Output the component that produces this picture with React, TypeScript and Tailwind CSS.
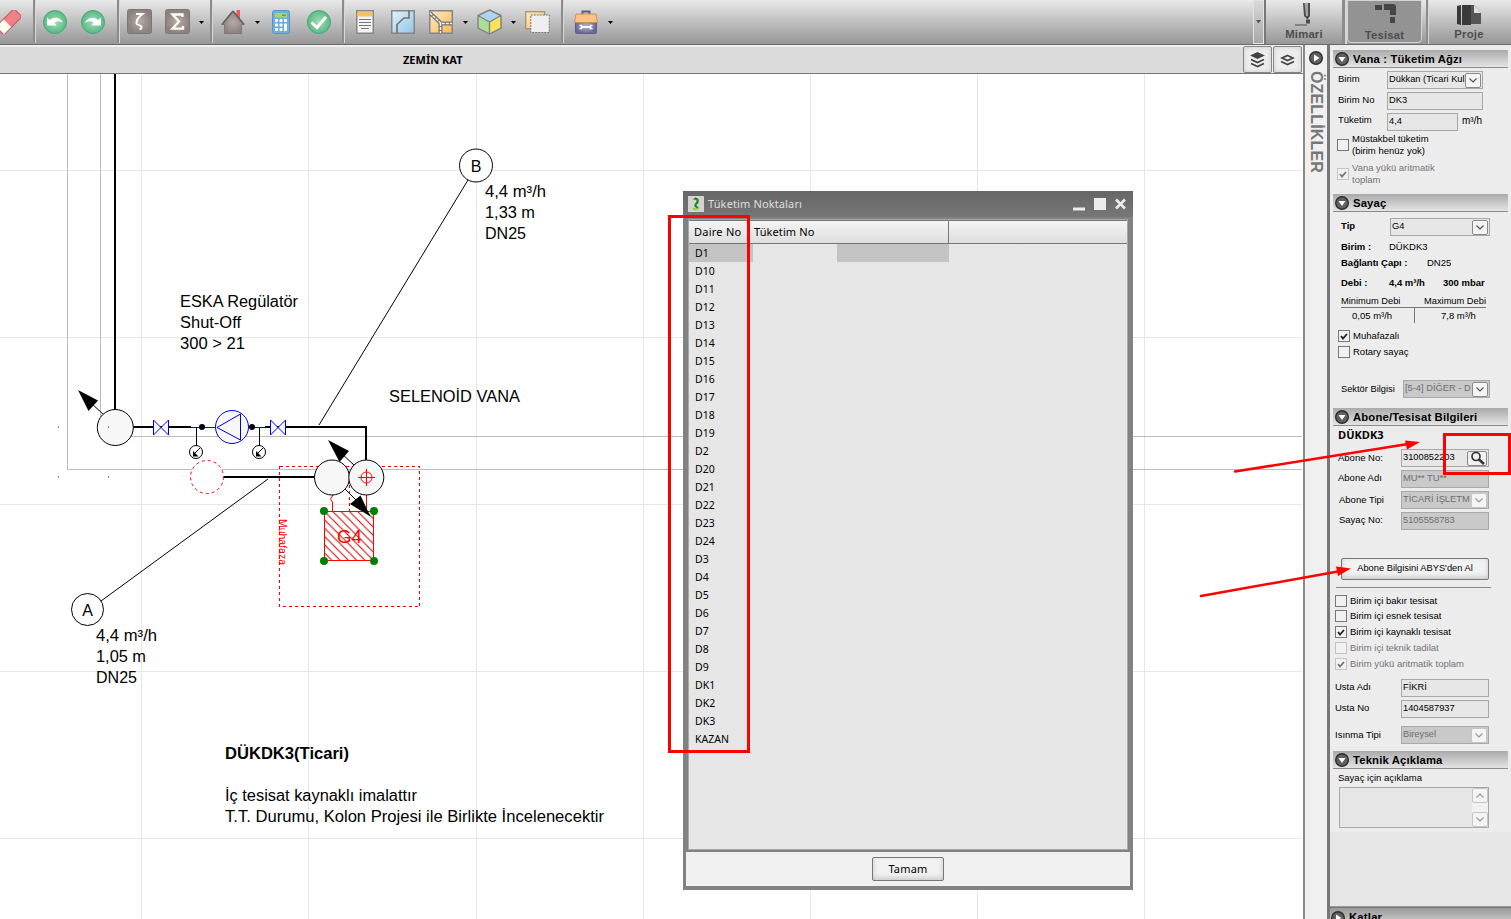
import type { ReactNode } from 'react';

const UNITS = [
  'D1', 'D10', 'D11', 'D12', 'D13', 'D14', 'D15', 'D16', 'D17', 'D18', 'D19', 'D2', 'D20', 'D21',
  'D22', 'D23', 'D24', 'D3', 'D4', 'D5', 'D6', 'D7', 'D8', 'D9', 'DK1', 'DK2', 'DK3', 'KAZAN',
];

/* ---------- toolbar ---------- */

const Sep = ({ className }: { className: string }) => (
  <div className={`h-[43px] w-[3px] shrink-0 self-start border-r border-[#d8d8d8] bg-[#8b8b8b] ${className}`} />
);

const Caret = ({ className }: { className: string }) => (
  <svg className={`h-[3px] w-[5px] shrink-0 ${className}`} viewBox="0 0 5 3"><path d="M0 0h5L2.5 3z" fill="#000" /></svg>
);

const Ico = ({ className, w = 24, h = 24, children }: { className: string; w?: number; h?: number; children: ReactNode }) => (
  <svg className={`-mt-px shrink-0 ${className}`} width={w} height={h} viewBox={`0 0 ${w} ${h}`}>{children}</svg>
);

function Toolbar() {
  return (
    <div className="flex h-[45px] shrink-0 items-center border-b border-[#6a6a6a] bg-linear-to-b from-[#e9e9e9] to-[#979797]">
      <svg width="0" height="0" className="absolute">
        <defs>
          <radialGradient id="green"><stop offset="0" stopColor="#a5dcb9" /><stop offset="1" stopColor="#58b985" /></radialGradient>
          <radialGradient id="taupe"><stop offset="0" stopColor="#b5aca9" /><stop offset="1" stopColor="#8b8280" /></radialGradient>
          <linearGradient id="blue" x1="0" y1="0" x2="1" y2="1"><stop offset="0" stopColor="#e4f2fb" /><stop offset="1" stopColor="#8fc4e6" /></linearGradient>
          <linearGradient id="amber" x1="0" y1="0" x2="1" y2="1"><stop offset="0" stopColor="#fdeccb" /><stop offset="1" stopColor="#fbb84e" /></linearGradient>
          <radialGradient id="violet"><stop offset="0" stopColor="#b5b2d6" /><stop offset="1" stopColor="#6b6896" /></radialGradient>
        </defs>
      </svg>
      <Ico className="-ml-[3px]">
        <g transform="rotate(-45 12 12)">
          <rect x="-1" y="6" width="26" height="11.500" rx="2.500" fill="#ee8185" stroke="#c95a62" />
          <rect x="0" y="6.500" width="10" height="10.500" fill="#fffdf0" />
        </g>
      </Ico>
      <Sep className="ml-3" />
      <Ico className="ml-[7px]">
        <circle cx="12" cy="12" r="11.500" fill="url(#green)" stroke="#45a873" />
        <path d="M4 15.500V7.500l3 2.500C11 6.500 17.500 7 20 13c-3-2-6-2.500-8.500-.5l2 3z" fill="#fff" />
      </Ico>
      <Ico className="ml-3.5">
        <circle cx="12" cy="12" r="11.500" fill="url(#green)" stroke="#45a873" />
        <path d="M20 15.500V7.500l-3 2.500C13 6.500 6.500 7 4 13c3-2 6-2.500 8.500-.5l-2 3z" fill="#fff" />
      </Ico>
      <Sep className="ml-3" />
      <Ico className="ml-[7px]" w={25} h={25}>
        <rect x=".5" y=".5" width="24" height="24" rx="2" fill="url(#taupe)" stroke="#7e7674" />
        <path d="M9 5h6.500c-5 4-6.500 7-6 9.500.8 2 5.500 1.500 5 4.200-.2 1-1 1.300-2 1.600" fill="none" stroke="#fffdf0" strokeWidth="2" />
      </Ico>
      <Ico className="ml-[13px]" w={25} h={25}>
        <rect x=".5" y=".5" width="24" height="24" rx="2" fill="url(#taupe)" stroke="#7e7674" />
        <path d="M17.500 8V5.500h-10l6.500 7-6.500 7.200h10.500V17" fill="none" stroke="#fffdf0" strokeWidth="2.300" />
      </Ico>
      <Caret className="ml-[9px]" />
      <Sep className="ml-1.5" />
      <Ico className="ml-2">
        <rect x="15.500" y="0" width="3.500" height="9" fill="#ee5a5a" />
        <path d="M12 1L.8 14.500H3.500V23.500h17v-9h2.700z" fill="url(#taupe)" stroke="#827876" />
        <path d="M12 1L1 14.500M12 1l11 13.500" stroke="#665e5c" strokeWidth="1.500" />
      </Ico>
      <Caret className="ml-2.5" />
      <Ico className="ml-3" w={18}>
        <rect x=".5" y=".5" width="17" height="23" rx="2" fill="#6fafdd" stroke="#5a94c4" />
        <rect x="3" y="3" width="12" height="4.500" rx="1" fill="#a8d468" />
        <rect x="10" y="4.500" width="4" height="1.500" fill="#58a552" />
        <g fill="#fff">
          <rect x="3" y="9" width="3" height="3" rx="1" /><rect x="7.500" y="9" width="3" height="3" rx="1" /><rect x="12" y="9" width="3" height="3" rx="1" />
          <rect x="3" y="13.500" width="3" height="3" rx="1" /><rect x="7.500" y="13.500" width="3" height="3" rx="1" /><rect x="12" y="13.500" width="3" height="7.500" rx="1" />
          <rect x="3" y="18" width="3" height="3" rx="1" /><rect x="7.500" y="18" width="3" height="3" rx="1" />
        </g>
      </Ico>
      <Ico className="ml-[17px]">
        <circle cx="12" cy="12" r="11.500" fill="url(#green)" stroke="#45a873" />
        <path d="M4.500 12.500l5.500 5L19 7" fill="none" stroke="#fff" strokeWidth="3" />
      </Ico>
      <Sep className="ml-[11px]" />
      <Ico className="ml-[11px]" w={18}>
        <rect x=".75" y=".75" width="16.500" height="22.500" fill="#f3f3f3" stroke="#858585" strokeWidth="1.500" />
        <rect x="1.500" y="2" width="15" height="4.500" fill="#fdbd62" />
        <path d="M3 9.500h12M3 12.500h12M3 15.500h12M5 18.500h8" stroke="#777" strokeWidth="1.200" />
      </Ico>
      <Ico className="ml-[17px]">
        <rect x=".75" y=".75" width="22.500" height="22.500" fill="url(#blue)" stroke="#858585" strokeWidth="1.500" />
        <path d="M6 23.500v-9l7-6.500h5V.5" fill="none" stroke="#747474" strokeWidth="1.700" />
      </Ico>
      <Ico className="ml-3.5">
        <rect x=".75" y=".75" width="22.500" height="22.500" fill="url(#amber)" stroke="#858585" strokeWidth="1.500" />
        <path d="M1 3l11 10.500h11M11.500 13v10" fill="none" stroke="#747474" strokeWidth="4" />
        <path d="M1 3l11 10.500h11M11.500 13v10" fill="none" stroke="#eee" strokeWidth="1.500" strokeDasharray="3 1" />
      </Ico>
      <Caret className="ml-2.5" />
      <Ico className="ml-[9px]" w={25} h={26}>
        <path d="M12.500 1L24 6.500 12.500 13 1 6.500z" fill="#acd5f2" />
        <path d="M1 6.500L12.500 13v12L1 19z" fill="#aadd96" />
        <path d="M24 6.500L12.500 13v12L24 19z" fill="#fbe25f" />
        <path d="M12.500 1L24 6.500V19l-11.500 6L1 19V6.500zM1 6.500L12.500 13 24 6.500M12.500 13v12" fill="none" stroke="#808080" strokeWidth="1.400" />
      </Ico>
      <Caret className="ml-[9px]" />
      <Ico className="ml-[9px]" w={25}>
        <rect x=".75" y="1.750" width="19" height="17" fill="url(#amber)" stroke="#9a8f70" strokeWidth="1.200" />
        <rect x="5.750" y="5" width="18.500" height="17.500" fill="#efefef" stroke="#777" strokeDasharray="2 1" />
      </Ico>
      <Sep className="ml-[11px]" />
      <Ico className="ml-2.5">
        <path d="M8.500 4V1.500h7V4" fill="none" stroke="#5e5b8c" strokeWidth="2" />
        <rect x="1.500" y="9" width="21" height="14.500" rx="1" fill="url(#violet)" stroke="#5e5b8c" />
        <path d="M2 4h20l1.500 8.500H.5z" fill="#fdc380" stroke="#c9904f" />
        <path d="M8 17h8" stroke="#fff" strokeWidth="2" />
        <path d="M5.500 15.500h2v3h-2M18.500 15.500h-2v3h2" fill="none" stroke="#fff" strokeWidth="1.500" />
      </Ico>
      <Caret className="ml-2.5" />

      <div className="ml-auto flex h-full w-[258px] shrink-0">
        <div className="flex h-[44px] w-[11px] items-center justify-center border border-[#e2e2e2] bg-linear-to-b from-[#d8d8d8] to-[#a8a8a8]">
          <svg width="5" height="4" viewBox="0 0 5 4"><path d="M0 0h5L2.500 3.500z" fill="#555" /></svg>
        </div>
        <div className="h-full w-0.5 bg-[#777]" />
        <ModeTab label="Mimari" className="w-[76px]">
          <path d="M11 1h7v13l-2.500 3.500L12 14z" fill="#4c4c4c" /><path d="M12.500 1h3.500v13h-2z" fill="#a5a5a5" />
          <path d="M14 17.500h4v4h-4z" fill="#4c4c4c" /><path d="M3 23h12" stroke="#4c4c4c" />
        </ModeTab>
        <div className="h-full w-[3px] bg-[#8c8c8c]" /><div className="h-full w-0.5 bg-[#d6d6d6]" />
        <div className="flex h-[43px] w-[75px] rounded-b-sm border border-[#d5d5d5] bg-[#939393]">
          <ModeTab label="Tesisat" className="w-full">
            <path d="M2 2h7v5H2zM11 1h9q3 0 3 3v8h-6V7h-6zM17 14h5v6h-5z" fill="#454545" />
          </ModeTab>
        </div>
        <div className="ml-1 h-full w-0.5 bg-[#8c8c8c]" /><div className="h-full w-px bg-[#d6d6d6]" />
        <ModeTab label="Proje" className="w-[80px]">
          <path d="M0 4l4-1v20l-4-1zM5 3h9v20H5z" fill="#3a3a3a" /><path d="M14 3h3l7 8v11H14z" fill="#565656" /><path d="M17 3l7 8h-7z" fill="#e0e0e0" />
        </ModeTab>
      </div>
    </div>
  );
}

const ModeTab = ({ label, className, children }: { label: string; className: string; children: ReactNode }) => (
  <div className={`flex flex-col items-center pt-[2px] ${className}`}>
    <svg width="24" height="24" viewBox="0 0 24 24" className="shrink-0">{children}</svg>
    <span className="mt-[2px] text-[11.3px] leading-[13px] font-bold tracking-[0.2px] text-[#4d4d4d]">{label}</span>
  </div>
);

/* ---------- drawing ---------- */

const Label = ({ x, y, len, children, bold }: { x: number; y: number; len: number; children: string; bold?: boolean }) => (
  <text x={x} y={y} textLength={len} lengthAdjust="spacingAndGlyphs" fontSize="16" fontWeight={bold ? 700 : 400} fill="#000">{children}</text>
);

const Valve = ({ x }: { x: number }) => (
  <path d={`M${x} 420v15l15-15v15z`} fill="#f7f7ff" stroke="#0000e6" />
);

const Gauge = ({ x }: { x: number }) => (
  <g>
    <path d={`M${x + 0.5} 428v18`} stroke="#000" />
    <circle cx={x} cy="452" r="6.500" fill="#fff" stroke="#000" />
    <path d={`M${x + 4} 448l-5 5`} stroke="#000" />
    <path d={`M${x - 3} 451v5.500h5.500z`} fill="#000" />
  </g>
);

function Drawing() {
  return (
    <svg className="block shrink-0 bg-white font-['Liberation_Sans',sans-serif]" width="1303" height="845" viewBox="0 74 1303 845">
      <g stroke="#e6e6e6" shapeRendering="crispEdges">
        {[141.5, 308.5, 476.5, 643.5, 810.5, 977.5, 1144.5].map((x) => <path key={x} d={`M${x} 74v845`} />)}
        {[170.5, 337.5, 504.5, 671.5, 838.5].map((y) => <path key={y} d={`M0 ${y}h1302`} />)}
      </g>
      <path d="M67.500 74v395.500H1302M100.500 74v362.500H1302" fill="none" stroke="#bdbdbd" shapeRendering="crispEdges" />
      <path d="M115 74v336M133 427h58M265 427h101v33M223 477h92" fill="none" stroke="#000" strokeWidth="2" shapeRendering="crispEdges" />
      <path d="M191 427.500h26M248 427.500h17" stroke="#0000e6" shapeRendering="crispEdges" />
      <path d="M58 426h1v2h-1zM58 476h1v2h-1zM108 476h1v2h-1z" fill="#8a8a8a" />

      <path d="M91 403l13 12" stroke="#000" />
      <path d="M78 390l20 10.500-9.500 10.500z" fill="#000" />
      <circle cx="115.300" cy="427.500" r="18" fill="#f7f7f7" stroke="#000" />
      <path d="M108 426h1v2h-1z" fill="#8a8a8a" />
      <Valve x={153.5} />
      <Valve x={270.5} />
      <Gauge x={196} />
      <Gauge x={259} />
      <circle cx="202" cy="427" r="3" /><circle cx="252" cy="427" r="3" />
      <circle cx="232" cy="427" r="16.500" fill="#f7f7f7" stroke="#0000e6" />
      <path d="M217 427.500l23.500-13.500v26z" fill="none" stroke="#0000e6" />

      <circle cx="207" cy="477" r="16.500" fill="#fff" stroke="#f00" strokeDasharray="3 3" />
      <rect x="279.500" y="466.500" width="140" height="140" fill="none" stroke="#f00" strokeDasharray="3 3" shapeRendering="crispEdges" />
      <path d="M268 479L101 601M468 180L319 425" stroke="#000" />
      <circle cx="87.500" cy="609.500" r="16" fill="#fff" stroke="#000" />
      <circle cx="476" cy="165.500" r="16.500" fill="#fff" stroke="#000" />

      <path d="M340 452l15 14" stroke="#000" />
      <path d="M328 440l21 11-9.500 11z" fill="#000" />
      <path d="M366.500 495v16M333 495l-2.500 4 2 3v9" fill="none" stroke="#f00" />
      <path d="M349.500 485v27" stroke="#f00" strokeDasharray="3 3" />
      <circle cx="332" cy="477.500" r="17.500" fill="#f7f7f7" stroke="#000" />
      <circle cx="366.300" cy="477.500" r="17.500" fill="#f7f7f7" stroke="#000" />
      <circle cx="366.500" cy="477.500" r="5.500" fill="none" stroke="#f00" />
      <path d="M358 477.500h17M366.500 469v17" stroke="#f00" />
      <defs>
        <pattern id="hatch" width="8.300" height="8.300" patternUnits="userSpaceOnUse" x="324" y="511">
          <path d="M-2-2L10.300 10.300M-2 6.300L2 10.300M6.300-2L10.300 2" stroke="#d00000" strokeWidth="1" />
        </pattern>
      </defs>
      <rect x="324.500" y="511.500" width="49" height="49" fill="#fff" />
      <rect x="324.500" y="511.500" width="49" height="49" fill="url(#hatch)" stroke="#f00" />
      <path d="M345 489l14 14" stroke="#000" />
      <path d="M370.500 516.500L350 504l10.500-8.500z" fill="#000" />
      <g fill="#008000"><circle cx="324" cy="511" r="4" /><circle cx="374" cy="511" r="4" /><circle cx="324" cy="561" r="4" /><circle cx="374" cy="561" r="4" /></g>
      <text x="337" y="543" textLength="25" lengthAdjust="spacingAndGlyphs" fontSize="18" fill="#f00">G4</text>
      <text transform="translate(279 519) rotate(90)" textLength="46" lengthAdjust="spacingAndGlyphs" fontSize="10" fill="#f00">Muhafaza</text>

      <text x="87.500" y="615.500" fontSize="16" textAnchor="middle">A</text>
      <text x="476" y="171.500" fontSize="16" textAnchor="middle">B</text>
      <Label x={485} y={197} len={61}>4,4 m³/h</Label>
      <Label x={485} y={218} len={50}>1,33 m</Label>
      <Label x={485} y={239} len={41}>DN25</Label>
      <Label x={180} y={307} len={118}>ESKA Regülatör</Label>
      <Label x={180} y={328} len={61}>Shut-Off</Label>
      <Label x={180} y={349} len={65}>{'300 > 21'}</Label>
      <Label x={389} y={402} len={131}>SELENOİD VANA</Label>
      <Label x={96} y={641} len={61}>4,4 m³/h</Label>
      <Label x={96} y={662} len={50}>1,05 m</Label>
      <Label x={96} y={683} len={41}>DN25</Label>
      <Label x={225} y={759} len={124} bold>DÜKDK3(Ticari)</Label>
      <Label x={225} y={801} len={192}>İç tesisat kaynaklı imalattır</Label>
      <Label x={225} y={822} len={379}>T.T. Durumu, Kolon Projesi ile Birlikte İncelenecektir</Label>
    </svg>
  );
}

function LayerButton({ single }: { single?: boolean }) {
  return (
    <div className="mt-px flex h-[27px] w-[29px] items-center justify-center rounded-xs border border-[#858585] bg-[#ededed] shadow-[inset_0_0_5px_#ccc]">
      {single ? (
        <svg width="15" height="12" viewBox="0 0 15 12" fill="none" stroke="#444" strokeWidth="1.700"><path d="M7.500 1.500L13 4 7.500 6.500 2 4zM1 7.500l6.500 3 6.500-3" /></svg>
      ) : (
        <svg width="15" height="16" viewBox="0 0 15 16" fill="none" stroke="#444" strokeWidth="1.700"><path d="M7.500 1L13 3.500 7.500 6 2 3.500z" fill="#444" /><path d="M1 7.500l6.500 3 6.500-3M1 11.500l6.500 3 6.500-3" /></svg>
      )}
    </div>
  );
}

/* ---------- property panel ---------- */

const RoundToggle = ({ right }: { right?: boolean }) => (
  <svg className="shrink-0" width="14" height="14" viewBox="0 0 14 14">
    <circle cx="7" cy="7" r="6.300" fill="#606060" stroke="#2e2e2e" strokeWidth="1.400" />
    <path d={right ? 'M5 3.500v7L10.500 7z' : 'M3.500 5h7L7 10z'} fill="#fff" />
  </svg>
);

const Header = ({ title, className = '' }: { title: string; className?: string }) => (
  <div className={`ml-[3px] flex h-[18px] w-[175px] shrink-0 items-center gap-1 border-b border-[#8c8c8c] bg-linear-to-b from-[#aaa] to-[#e4e4e4] pl-[2px] text-[11.3px] font-bold tracking-[0.15px] text-black ${className}`}>
    <RoundToggle />
    <span className="pt-px leading-4 whitespace-nowrap">{title}</span>
  </div>
);

const Drop = ({ up, dim }: { up?: boolean; dim?: boolean }) => (
  <span className={`flex h-[15px] w-[16px] shrink-0 items-center justify-center rounded-xs border bg-[#f4f4f4] ${dim ? 'border-[#c5c5c5]' : 'border-[#8a8a8a]'}`}>
    <svg width="8" height="5" viewBox="0 0 8 5" fill="none" stroke={dim ? '#999' : '#555'} strokeWidth="1.200"><path d={up ? 'M.5 4.500L4 1l3.500 3.500' : 'M.5.5L4 4 7.500.5'} /></svg>
  </span>
);

const Field = ({ value, className, drop, off, children }: { value: string; className: string; drop?: boolean; off?: boolean; children?: ReactNode }) => (
  <div className={`flex h-[18px] shrink-0 items-center justify-between border border-[#a8a8a8] pr-px pl-px text-[9.3px] ${off ? 'bg-[#c9c9c9] text-[#6f6b73]' : 'bg-[#e6e6e6] text-black'} ${className}`}>
    <span className="min-w-0 pb-[2px] leading-[13px] whitespace-nowrap">{value}</span>
    {drop && <Drop />}
    {children}
  </div>
);

const Check = ({ on, dim }: { on?: boolean; dim?: boolean }) => (
  <span className={`flex h-3 w-3 shrink-0 items-center justify-center border bg-[#f1f1f1] ${dim ? 'border-[#c4c4c4]' : 'border-[#777]'}`}>
    {on && <svg width="8" height="7" viewBox="0 0 8 7" fill="none" stroke={dim ? '#777' : '#222'} strokeWidth="1.800"><path d="M1 3l2 2.500L7 1" /></svg>}
  </span>
);

const CheckRow = ({ label, on, dim, className }: { label: string; on?: boolean; dim?: boolean; className: string }) => (
  <div className={`flex h-4 shrink-0 items-center gap-[3px] whitespace-nowrap ${dim ? 'text-[#77717a]' : ''} ${className}`}>
    <Check on={on} dim={dim} />
    <span className="leading-3">{label}</span>
  </div>
);

const Row = ({ label, className, labelClass, children }: { label: string; className: string; labelClass: string; children?: ReactNode }) => (
  <div className={`flex h-[18px] shrink-0 items-center whitespace-nowrap ${className}`}>
    <span className={`shrink-0 leading-4 ${labelClass}`}>{label}</span>
    {children}
  </div>
);

function Properties() {
  return (
    <div className="flex w-[184px] shrink-0 flex-col border-l-[3px] border-[#777] bg-[#e6e6e6] text-[9.5px] text-black">
      <div className="flex h-[787px] shrink-0 flex-col bg-[#ececec] pt-[5px]">
        <Header title="Vana : Tüketim Ağzı" />
        <Row label="Birim" className="mt-[3px] ml-2" labelClass="w-[49px] pb-0.5"><Field value="Dükkan (Ticari Kul" className="w-[96px]" drop /></Row>
        <Row label="Birim No" className="mt-[3px] ml-2" labelClass="w-[49px] pb-0.5"><Field value="DK3" className="w-[96px]" /></Row>
        <Row label="Tüketim" className="mt-[3px] ml-2" labelClass="w-[49px] pb-1"><Field value="4,4" className="w-[71px]" /><span className="ml-1 pb-1 text-[10px]">m³/h</span></Row>
        <div className="mt-[2px] ml-[7px] flex h-6 shrink-0 items-end gap-[3px] leading-3 whitespace-nowrap">
          <span className="shrink-0 pb-[6px]"><Check /></span>
          <span>Müstakbel tüketim<br />(birim henüz yok)</span>
        </div>
        <div className="mt-[5px] ml-[7px] flex h-6 shrink-0 items-end gap-[3px] leading-3 whitespace-nowrap text-[#77717a]">
          <span className="shrink-0 pb-[6px]"><Check on dim /></span>
          <span>Vana yükü aritmatik<br />toplam</span>
        </div>

        <Header title="Sayaç" className="mt-2" />
        <Row label="Tip" className="mt-1.5 ml-[11px]" labelClass="w-[49px] pb-0.5 font-bold"><Field value="G4" className="w-[100px]" drop /></Row>
        <Row label="Birim :" className="mt-0.5 ml-[11px]" labelClass="w-[48px] font-bold"><span>DÜKDK3</span></Row>
        <Row label="Bağlantı Çapı :" className="-mt-0.5 ml-[11px]" labelClass="w-[86px] font-bold"><span>DN25</span></Row>
        <Row label="Debi :" className="mt-0.5 ml-[11px] font-bold" labelClass="w-[48px]"><span className="w-[54px]">4,4 m³/h</span><span>300 mbar</span></Row>
        <div className="mt-[2px] ml-[11px] flex h-[14px] w-[145px] shrink-0 items-center justify-between border-b border-[#777] text-[9.3px] leading-3 whitespace-nowrap">
          <span>Minimum Debi</span><span>Maximum Debi</span>
        </div>
        <div className="ml-[11px] flex h-[15px] w-[145px] shrink-0 items-center leading-3 whitespace-nowrap">
          <span className="flex h-full w-[74px] items-center border-r border-[#777] pt-px pl-[11px]">0,05 m³/h</span><span className="pt-px pl-[26px]">7,8 m³/h</span>
        </div>
        <CheckRow label="Muhafazalı" on className="mt-[5px] ml-2" />
        <CheckRow label="Rotary sayaç" className="ml-2" />
        <Row label="Sektör Bilgisi" className="mt-5 ml-[11px] text-[9.3px]" labelClass="w-[62px]"><Field value="[5-4] DİĞER - D" className="w-[87px]" drop off /></Row>

        <Header title="Abone/Tesisat Bilgileri" className="mt-[10px]" />
        <div className="mt-[2px] ml-2 h-[14px] shrink-0 font-['Open_Sans',sans-serif] text-[11px] leading-[14px] font-bold">DÜKDK3</div>
        <Row label="Abone No:" className="mt-[7px] ml-2" labelClass="w-[63px]">
          <Field value="3100852203" className="w-[88px]">
            <span className="flex h-[15px] w-5 shrink-0 items-center justify-center rounded-xs border border-[#888] bg-[#f1f1f1]">
              <svg width="15" height="14" viewBox="0 0 15 14" fill="none" stroke="#333"><circle cx="6" cy="5.500" r="4" strokeWidth="1.700" /><path d="M9 8.500l5 4.500" strokeWidth="2.500" /></svg>
            </span>
          </Field>
        </Row>
        <Row label="Abone Adı" className="mt-[3px] ml-2" labelClass="w-[63px] pb-0.5"><Field value="MU** TU**" className="w-[88px]" off /></Row>
        <Row label="Abone Tipi" className="mt-[3px] ml-2" labelClass="w-[63px] pl-px"><Field value="TİCARİ İŞLETM" className="w-[88px]" off><Drop dim /></Field></Row>
        <Row label="Sayaç No:" className="mt-[3px] ml-2" labelClass="w-[63px] pb-0.5 pl-px"><Field value="5105558783" className="w-[88px]" off /></Row>
        <div className="mt-7 ml-[11px] flex h-[22px] w-[148px] shrink-0 items-center justify-center rounded-xs border border-[#777] bg-[#f2f2f2] text-[9.3px] whitespace-nowrap shadow-[inset_0_-2px_5px_#c6c6c6]">Abone Bilgisini ABYS'den Al</div>
        <div className="mt-[7px] ml-1.5 h-px w-[155px] shrink-0 bg-[#8a8a8a]" />
        <CheckRow label="Birim içi bakır tesisat" className="mt-[5px] ml-[5px]" />
        <CheckRow label="Birim içi esnek tesisat" className="-mt-px ml-[5px]" />
        <CheckRow label="Birim içi kaynaklı tesisat" on className="ml-[5px]" />
        <CheckRow label="Birim içi teknik tadilat" dim className="ml-[5px]" />
        <CheckRow label="Birim yükü aritmatik toplam" on dim className="ml-[5px]" />
        <Row label="Usta Adı" className="mt-[7px] ml-[5px]" labelClass="w-[66px] pb-0.5"><Field value="FİKRİ" className="w-[88px]" /></Row>
        <Row label="Usta No" className="mt-[3px] ml-[5px]" labelClass="w-[66px] pb-0.5"><Field value="1404587937" className="w-[88px]" /></Row>
        <Row label="Isınma Tipi" className="mt-[8px] ml-[5px]" labelClass="w-[66px]"><Field value="Bireysel" className="w-[88px]" off><Drop dim /></Field></Row>

        <Header title="Teknik Açıklama" className="mt-[7px]" />
        <div className="mt-[3px] ml-2 h-3 shrink-0 leading-3">Sayaç için açıklama</div>
        <div className="mt-[3px] ml-[9px] flex h-[41px] w-[150px] shrink-0 justify-end border border-[#a8a8a8] bg-[#e6e6e6]">
          <div className="flex w-4 flex-col justify-between bg-[#f1f1f1]"><Drop up dim /><Drop dim /></div>
        </div>
      </div>
      <div className="h-[75px] shrink-0 border-b border-[#999]" />
      <div className="flex h-[20px] shrink-0 items-center gap-1 border-t border-[#777] bg-linear-to-b from-[#999] to-[#ddd] pl-[1px] text-[11.3px] font-bold">
        <RoundToggle right /><span className="tracking-[0.2px]">Katlar</span>
      </div>
    </div>
  );
}

/* ---------- dialog ---------- */

function Dialog() {
  return (
    <div className="absolute top-[191px] left-[683px] flex h-[699px] w-[450px] flex-col bg-[#828282] font-['Noto_Sans',sans-serif] text-[11px] text-black">
      <div className="flex h-[26px] shrink-0 items-center bg-linear-to-b from-[#666] to-[#777] pr-1.5 pl-[5px]">
        <svg width="16" height="16" viewBox="0 0 16 16"><rect width="16" height="16" fill="#d3d3d3" /><path d="M7 2.500c4 .5 3 3.500 1 5.500-1.500 1.500-.5 2.500 2 4" fill="none" stroke="#158a20" strokeWidth="2.200" /><path d="M5 12.500c2.500 1.500 5 1 6-1" fill="none" stroke="#8cd22c" strokeWidth="1.600" /><path d="M4.500 3.500l3-2 2 2z" fill="#158a20" /></svg>
        <span className="ml-1 flex-1 tracking-[0.13px] text-[#dedede]">Tüketim Noktaları</span>
        <svg width="54" height="13" viewBox="0 0 54 13"><path d="M0 9.500h12v3H0zM21 0h12v12H21z" fill="#ececec" /><path d="M43 1.500l9 9M52 1.500l-9 9" stroke="#ececec" strokeWidth="2.600" /></svg>
      </div>
      <div className="mx-[5px] mt-[2px] flex h-[631px] shrink-0 flex-col border border-[#a8a8a8] bg-[#e6e6e6]">
        <div className="flex h-[24px] shrink-0 items-center border-y border-[#777] bg-linear-to-b from-[#f4f4f4] to-[#dedede] tracking-[0.25px]">
          <span className="w-[62px] pl-[5px] whitespace-nowrap">Daire No</span>
          <span className="flex h-full w-[198px] items-center border-r border-[#777] pl-[3px] tracking-[0.1px]">Tüketim No</span>
        </div>
        {UNITS.map((u, i) => (
          <div key={u} className="flex h-[18px] shrink-0 items-center text-[10.5px]">
            <span className={`flex h-full w-[64px] items-center pt-[2px] pl-1.5 ${i === 0 ? 'bg-[#c3c3c3]' : ''}`}>{u}</span>
            {i === 0 && <span className="ml-[84px] h-full w-[112px] bg-[#c3c3c3]" />}
          </div>
        ))}
      </div>
      <div className="mx-[3px] mt-[2px] flex h-[34px] shrink-0 items-center justify-center bg-[#f0f0f0]">
        <button className="h-[24px] w-[72px] rounded-xs border border-[#777] bg-[#f2f2f2] text-[11px] leading-[22px] tracking-[0.2px] shadow-[inset_0_-2px_5px_#c6c6c6]">Tamam</button>
      </div>
    </div>
  );
}

export default function App() {
  return (
    <div className="relative flex h-[919px] w-[1511px] flex-col overflow-hidden bg-[#f0f0f0] font-['Liberation_Sans',sans-serif]">
      <Toolbar />
      <div className="flex min-h-0 flex-1">
        <div className="flex w-[1303px] shrink-0 flex-col">
          <div className="flex h-[29px] shrink-0 border-b border-[#777]">
            <div className="mt-0.5 flex h-[26px] w-[1243px] items-center bg-[#dbdbdb] pl-[403px] font-['Noto_Sans',sans-serif] text-[11px] font-bold">ZEMİN KAT</div>
            <LayerButton />
            <div className="w-px" />
            <LayerButton single />
          </div>
          <Drawing />
        </div>
        <div className="flex w-6 shrink-0 flex-col items-center border-l-2 border-[#8a8a8a] bg-[#f0f0f0] pt-[6px]">
          <RoundToggle right />
          <span className="mt-[6px] text-[16px] leading-5 font-bold tracking-[0.15px] text-[#777] [writing-mode:vertical-rl]">ÖZELLİKLER</span>
        </div>
        <Properties />
      </div>
      <Dialog />
      <svg className="pointer-events-none absolute top-0 left-0" width="1511" height="919" viewBox="0 0 1511 919">
        <g fill="none" stroke="#f00" strokeWidth="3" strokeLinecap="round">
          <rect x="669.500" y="216.500" width="79" height="535" />
          <rect x="1444.500" y="434.500" width="65" height="39" />
          <path d="M1235 471.500L1408 444M1201 596L1338 571.500" strokeWidth="2.500" />
        </g>
        <path d="M1420 442l-15-1.500 2 9zM1351 568.500l-15-2 2 9.500z" fill="#f00" />
      </svg>
    </div>
  );
}
